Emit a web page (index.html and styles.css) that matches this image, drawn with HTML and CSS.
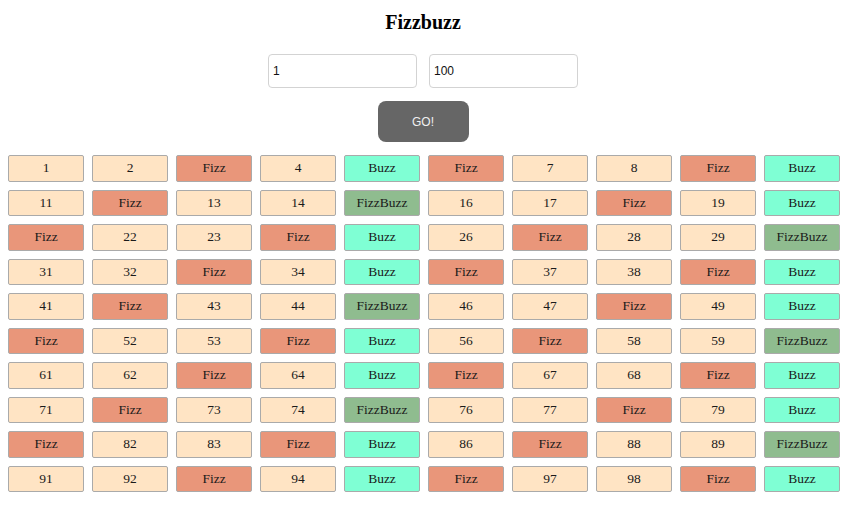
FILE: index.html
```html
<!DOCTYPE html>
<html>
<head>
<meta charset="utf-8">
<link rel="stylesheet" href="styles.css">
</head>
<body>
<h1 class="title">Fizzbuzz</h1>
<div class="inputs">
  <input class="field" type="text" value="1">
  <input class="field" type="text" value="100">
</div>
<div class="actions">
  <button class="go">GO!</button>
</div>
<div class="grid" id="grid"></div>
<script src="app.js"></script>
</body>
</html>
```
FILE: styles.css
```css
body {
  margin: 8px 6px 8px 8px;
  font-family: "Liberation Serif", "Times New Roman", serif;
  background: #fff;
}
.title {
  font-size: 20px;
  font-weight: bold;
  text-align: center;
  margin: 0 2px 0 0;
  padding-top: 3px;
  height: 46px;
  box-sizing: border-box;
  line-height: 23px;
}
.inputs {
  display: flex;
  justify-content: center;
  gap: 12px;
  margin-right: 2px;
}
.field {
  box-sizing: border-box;
  width: 149px;
  height: 34px;
  border: 1px solid #d3d3d3;
  border-radius: 4px;
  padding: 0 4px;
  font-family: "Liberation Sans", Arial, sans-serif;
  font-size: 12px;
  color: #111;
  outline: none;
}
.actions {
  display: flex;
  justify-content: center;
  margin: 13px 2px 0 0;
}
.go {
  width: 91px;
  height: 41px;
  background: #666;
  color: #f0f0f0;
  border: none;
  border-radius: 8px;
  font-family: "Liberation Sans", Arial, sans-serif;
  font-size: 12px;
}
.grid {
  margin-top: 13px;
  display: grid;
  grid-template-columns: repeat(10, 76px);
  column-gap: 8px;
  row-gap: 8px;
}
.cell {
  box-sizing: border-box;
  height: 26.5px;
  line-height: 24px;
  text-align: center;
  font-size: 13.5px;
  border: 1px solid #aaa;
  border-radius: 2px;
  background: bisque;
  color: #1a1a1a;
}
.cell.fizz { background: darksalmon; }
.cell.buzz { background: aquamarine; }
.cell.fizzbuzz { background: darkseagreen; }
```
FILE: app.js
```js
var grid = document.getElementById('grid');
for (var i = 1; i <= 100; i++) {
  var d = document.createElement('div');
  d.className = 'cell';
  var t = String(i);
  if (i % 15 === 0) { t = 'FizzBuzz'; d.className += ' fizzbuzz'; }
  else if (i % 3 === 0) { t = 'Fizz'; d.className += ' fizz'; }
  else if (i % 5 === 0) { t = 'Buzz'; d.className += ' buzz'; }
  d.textContent = t;
  grid.appendChild(d);
}
```
